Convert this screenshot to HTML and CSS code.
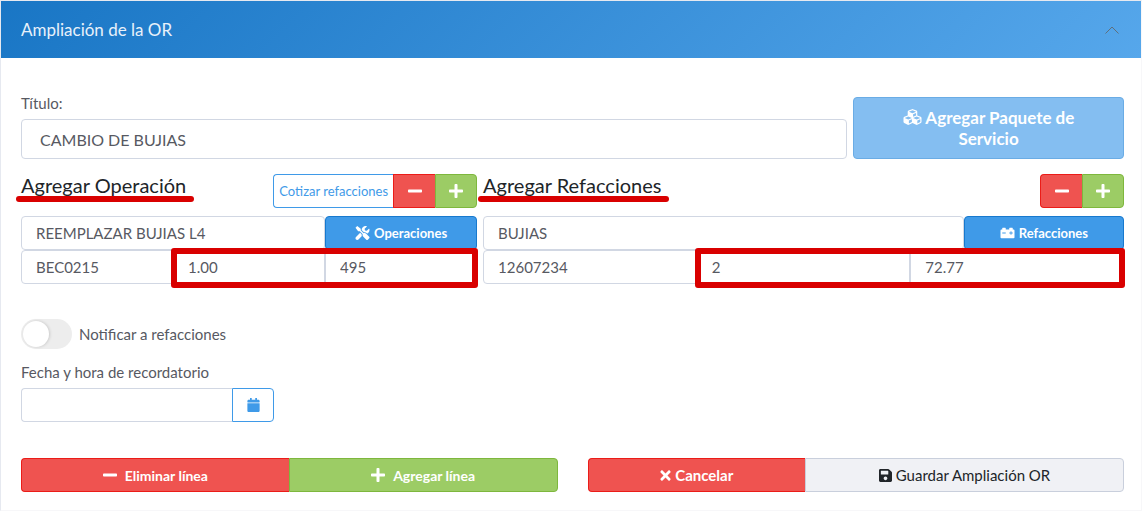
FILE: index.html
```
<!DOCTYPE html>
<html lang="es">
<head>
    <meta charset="UTF-8">
    <meta name="viewport" content="width=device-width, initial-scale=1.0">
    <title>Ampliación de la OR</title>
    <link rel="stylesheet" href="styles.css">
</head>
<body>
<svg class="sprite" aria-hidden="true">
    <symbol id="minus" viewBox="0 0 448 512"><path d="M416 208H32c-17.67 0-32 14.33-32 32v32c0 17.67 14.33 32 32 32h384c17.67 0 32-14.33 32-32v-32c0-17.67-14.33-32-32-32z"/></symbol>
    <symbol id="plus" viewBox="0 0 448 512"><path d="M416 208H272V64c0-17.67-14.33-32-32-32h-32c-17.67 0-32 14.33-32 32v144H32c-17.67 0-32 14.33-32 32v32c0 17.67 14.33 32 32 32h144v144c0 17.67 14.33 32 32 32h32c17.67 0 32-14.33 32-32V304h144c17.67 0 32-14.33 32-32v-32c0-17.67-14.33-32-32-32z"/></symbol>
</svg>

<div class="card">
    <header class="card-header">
        <h1>Ampliación de la OR</h1>
        <button class="collapse-btn" type="button" aria-label="Contraer">
            <svg viewBox="0 0 14 8"><path d="M.5 7.500L7 1l6.500 6.500"/></svg>
        </button>
    </header>

    <form class="card-body">
        <div class="title-row">
            <div class="field">
                <label for="titulo">Título:</label>
                <input class="input-lg" type="text" id="titulo" value="CAMBIO DE BUJIAS">
            </div>
            <button class="btn btn-package" type="button" disabled>
                <span><svg class="icon icon-cubes" viewBox="0 0 512 512"><path d="M488.600 250.200L392 214V105.500c0-15-9.300-28.400-23.400-33.700l-100-37.500c-8.100-3.100-17.100-3.100-25.300 0l-100 37.500c-14.100 5.300-23.400 18.700-23.400 33.700V214l-96.600 36.200C9.300 255.500 0 268.900 0 283.900V394c0 13.600 7.700 26.100 19.900 32.200l100 50c10.100 5.100 22.100 5.100 32.200 0l103.900-52 103.900 52c10.100 5.100 22.100 5.100 32.200 0l100-50c12.200-6.100 19.900-18.600 19.900-32.200V283.900c0-15-9.300-28.400-23.400-33.700zM358 214.800l-85 31.900v-68.200l85-37v73.300zM154 104.100l102-38.200 102 38.200v.6l-102 41.400-102-41.400v-.6zm84 291.100l-85 42.500v-79.100l85-38.800v75.400zm0-112l-102 41.400-102-41.400v-.6l102-38.200 102 38.200v.6zm240 112l-85 42.500v-79.100l85-38.800v75.400zm0-112l-102 41.400-102-41.400v-.6l102-38.200 102 38.200v.6z"/></svg> Agregar Paquete de Servicio</span>
            </button>
        </div>

        <div class="columns">
            <section>
                <div class="section-head">
                    <h2 class="marked">Agregar Operación</h2>
                    <div class="btn-group">
                        <button class="btn btn-quote" type="button">Cotizar refacciones</button>
                        <button class="btn btn-danger btn-square" type="button" aria-label="Quitar operación"><svg class="icon icon-lg"><use href="#minus"/></svg></button>
                        <button class="btn btn-success btn-square" type="button" aria-label="Agregar operación"><svg class="icon icon-lg"><use href="#plus"/></svg></button>
                    </div>
                </div>
                <div class="input-row">
                    <input class="wide" type="text" aria-label="Operación" value="REEMPLAZAR BUJIAS L4">
                    <button class="btn btn-primary third" type="button">
                        <svg class="icon icon-md" viewBox="0 0 512 512"><path d="M501.100 395.700L384 278.600c-23.100-23.100-57.600-27.600-85.400-13.900L192 158.100V96L64 0 0 64l96 128h62.100l106.600 106.600c-13.600 27.800-9.200 62.300 13.900 85.400l117.100 117.100c14.600 14.600 38.200 14.600 52.700 0l52.700-52.700c14.500-14.600 14.500-38.200 0-52.700zM331.700 225c28.300 0 54.900 11 74.900 31l19.400 19.400c15.800-6.900 30.800-16.500 43.800-29.500 37.100-37.100 49.700-89.300 37.900-136.700-2.200-9-13.500-12.100-20.100-5.500l-74.400 74.400-67.900-11.300L334 98.900l74.400-74.400c6.600-6.600 3.400-17.900-5.700-20.200-47.400-11.700-99.600.9-136.600 37.900-28.500 28.500-41.900 66.100-41.200 103.600l82.100 82.100c8.100-1.900 16.500-2.900 24.700-2.900zm-103.900 82l-56.700-56.700L18.700 402.800c-25 25-25 65.500 0 90.500s65.500 25 90.500 0l123.600-123.600c-7.600-19.900-9.900-41.600-5-62.700z"/></svg>
                        Operaciones
                    </button>
                </div>
                <div class="input-row values">
                    <input type="text" aria-label="Código" value="BEC0215">
                    <input type="text" aria-label="Horas" value="1.00">
                    <input type="text" aria-label="Precio" value="495">
                </div>
            </section>

            <section>
                <div class="section-head">
                    <h2 class="marked">Agregar Refacciones</h2>
                    <div class="btn-group">
                        <button class="btn btn-danger btn-square" type="button" aria-label="Quitar refacción"><svg class="icon icon-lg"><use href="#minus"/></svg></button>
                        <button class="btn btn-success btn-square" type="button" aria-label="Agregar refacción"><svg class="icon icon-lg"><use href="#plus"/></svg></button>
                    </div>
                </div>
                <div class="input-row">
                    <input class="wide" type="text" aria-label="Refacción" value="BUJIAS">
                    <button class="btn btn-primary quarter" type="button">
                        <svg class="icon icon-md" viewBox="0 0 512 512"><path d="M480 128h-32V80c0-8.840-7.160-16-16-16h-96c-8.840 0-16 7.160-16 16v48H192V80c0-8.840-7.160-16-16-16H80c-8.840 0-16 7.160-16 16v48H32c-17.670 0-32 14.330-32 32v256c0 17.670 14.330 32 32 32h448c17.670 0 32-14.330 32-32V160c0-17.670-14.330-32-32-32zM192 264c0 4.420-3.580 8-8 8H72c-4.420 0-8-3.580-8-8v-16c0-4.420 3.580-8 8-8h112c4.420 0 8 3.580 8 8v16zm256 0c0 4.420-3.580 8-8 8h-40v40c0 4.420-3.580 8-8 8h-16c-4.420 0-8-3.580-8-8v-40h-40c-4.420 0-8-3.580-8-8v-16c0-4.420 3.580-8 8-8h40v-40c0-4.420 3.580-8 8-8h16c4.420 0 8 3.580 8 8v40h40c4.420 0 8 3.580 8 8v16z"/></svg>
                        Refacciones
                    </button>
                </div>
                <div class="input-row values">
                    <input type="text" aria-label="Número de parte" value="12607234">
                    <input type="text" aria-label="Cantidad" value="2">
                    <input type="text" aria-label="Precio unitario" value="72.77">
                </div>
            </section>
        </div>

        <div class="notify">
            <input type="checkbox" id="notificar">
            <label for="notificar">Notificar a refacciones</label>
        </div>

        <div class="field reminder">
            <label for="fecha">Fecha y hora de recordatorio</label>
            <div class="date-group">
                <input type="text" id="fecha">
                <button class="btn btn-outline btn-square" type="button" aria-label="Abrir calendario">
                    <svg class="icon icon-md" viewBox="0 0 448 512"><path d="M12 192h424c6.600 0 12 5.400 12 12v260c0 26.500-21.500 48-48 48H48c-26.500 0-48-21.500-48-48V204c0-6.600 5.400-12 12-12zm436-44v-36c0-26.500-21.500-48-48-48h-48V12c0-6.600-5.400-12-12-12h-40c-6.600 0-12 5.400-12 12v52H160V12c0-6.600-5.400-12-12-12h-40c-6.600 0-12 5.400-12 12v52H48C21.500 64 0 85.500 0 112v36c0 6.600 5.400 12 12 12h424c6.600 0 12-5.400 12-12z"/></svg>
                </button>
            </div>
        </div>

        <div class="actions">
            <div class="btn-group line-actions">
                <button class="btn btn-danger" type="button"><svg class="icon icon-lg"><use href="#minus"/></svg> Eliminar línea</button>
                <button class="btn btn-success" type="button"><svg class="icon icon-lg"><use href="#plus"/></svg> Agregar línea</button>
            </div>
            <div class="btn-group save-actions">
                <button class="btn btn-danger" type="button">
                    <svg class="icon icon-x" viewBox="0 0 352 512"><path d="M242.720 256l100.070-100.070c12.280-12.280 12.280-32.190 0-44.480l-22.240-22.240c-12.280-12.280-32.190-12.280-44.480 0L176 189.280 75.930 89.210c-12.280-12.280-32.190-12.280-44.480 0L9.210 111.450c-12.280 12.280-12.280 32.190 0 44.480L109.280 256 9.210 356.070c-12.280 12.280-12.280 32.190 0 44.480l22.240 22.240c12.280 12.280 32.200 12.280 44.480 0L176 322.720l100.070 100.070c12.280 12.280 32.200 12.280 44.480 0l22.240-22.240c12.280-12.280 12.280-32.190 0-44.480L242.720 256z"/></svg>
                    Cancelar
                </button>
                <button class="btn btn-light" type="submit">
                    <svg class="icon icon-save" viewBox="0 0 448 512"><path d="M433.941 129.941l-83.882-83.882A48 48 0 0 0 316.118 32H48C21.490 32 0 53.490 0 80v352c0 26.510 21.490 48 48 48h352c26.510 0 48-21.490 48-48V163.882a48 48 0 0 0-14.059-33.941zM224 416c-35.346 0-64-28.654-64-64 0-35.346 28.654-64 64-64s64 28.654 64 64c0 35.346-28.654 64-64 64zm96-304.520V212c0 6.627-5.373 12-12 12H76c-6.627 0-12-5.373-12-12V108c0-6.627 5.373-12 12-12h228.520c3.183 0 6.235 1.264 8.485 3.515l3.480 3.480A11.996 11.996 0 0 1 320 111.480z"/></svg>
                    Guardar Ampliación OR
                </button>
            </div>
        </div>
    </form>
</div>
</body>
</html>
```
FILE: styles.css
```
* {
    box-sizing: border-box;
}
body {
    margin: 0;
    background: #fff;
    color: #575962;
    font-family: Lato, sans-serif;
    font-size: 15px;
}
h1, h2 {
    margin: 0;
    font-weight: 400;
}
.sprite {
    display: none;
}
.card {
    border: 1px solid #e6e9f0;
    border-right-color: #f7f7f9;
    border-bottom-color: #f7f7f9;
}
.card-header {
    display: flex;
    justify-content: space-between;
    align-items: center;
    height: 57px;
    padding: 0 22px 0 20px;
    background: linear-gradient(135deg, #1976c5, #56a7eb);
    color: #e8f1fa;
}
.card-header h1 {
    font-size: 17px;
    line-height: 24px;
}
.collapse-btn {
    display: flex;
    padding: 0;
    border: 0;
    background: none;
    cursor: pointer;
}
.collapse-btn svg {
    width: 14px;
    height: 8px;
    fill: none;
    stroke: #5f6f7c;
}
.card-body {
    padding: 34px 17px 18px 20px;
}
label {
    line-height: 22px;
}
input[type="text"] {
    width: 100%;
    min-width: 0;
    height: 34px;
    padding: 0 14px;
    border: 1px solid #d1d7e3;
    border-radius: 4px;
    background: #fff;
    color: #575962;
    font-family: inherit;
    font-size: 15px;
}
input.input-lg {
    height: 40px;
    padding: 0 18px;
    font-size: 16px;
}
.field {
    display: flex;
    flex-direction: column;
    gap: 5px;
}

/* buttons */
.btn {
    display: flex;
    justify-content: center;
    align-items: center;
    gap: 4px;
    height: 34px;
    padding: 0 5px;
    border: 1px solid;
    border-radius: 4px;
    font-family: inherit;
    font-size: 14px;
    font-weight: 700;
    white-space: nowrap;
    cursor: pointer;
}
.btn-danger {
    background: #ef5350;
    border-color: #eb1c18;
    color: #fff;
}
.btn-success {
    background: #9ccc65;
    border-color: #7eb73d;
    color: #fff;
}
.btn-primary {
    background: #3f9ae8;
    border-color: #1779ce;
    color: #fff;
    font-size: 13px;
}
.btn-outline, .btn-quote {
    background: #fff;
    border-color: #3f9ae8;
    color: #3f9ae8;
}
.btn-quote {
    font-size: 13px;
    font-weight: 400;
}
.btn-light {
    background: #f0f1f5;
    border-color: #c9cfdc;
    color: #212529;
    font-weight: 400;
}
.btn-square {
    width: 42px;
}
.btn-package {
    height: auto;
    min-height: 62px;
    padding: 0 32px;
    background: #84bef1;
    border-color: #6aace5;
    color: #fff;
    font-size: 17px;
    line-height: 21px;
    white-space: normal;
    cursor: default;
}
.btn-group {
    display: flex;
}
.btn-group .btn:not(:first-child) {
    border-top-left-radius: 0;
    border-bottom-left-radius: 0;
}
.btn-group .btn:not(:last-child) {
    border-top-right-radius: 0;
    border-bottom-right-radius: 0;
    border-right: 0;
}
.icon {
    width: 14px;
    height: 14px;
    fill: currentColor;
}
.icon-md {
    width: 15px;
    height: 14px;
}
.icon-lg {
    width: 14px;
    height: 16px;
}
.icon-cubes {
    width: 19px;
    height: 18px;
    vertical-align: -2px;
}
.icon-x {
    width: 11px;
    height: 15px;
}
.icon-save {
    width: 13px;
    height: 15px;
}

.title-row {
    display: grid;
    grid-template-columns: 61fr 20fr;
    align-items: end;
    gap: 6px;
}
.columns {
    display: grid;
    grid-template-columns: 37fr 52fr;
    gap: 6px;
    margin-top: 15px;
}
.section-head {
    display: flex;
    justify-content: space-between;
    align-items: flex-start;
    margin-bottom: 8px;
}
.section-head h2 {
    color: #212529;
    font-size: 20px;
    line-height: 22px;
}
.input-row {
    display: flex;
}
.input-row .wide {
    flex: 1;
}
.third {
    flex: 0 0 33.333%;
}
.quarter {
    flex: 0 0 25%;
}

/* red marker over the section titles and the editable amounts */
.marked {
    position: relative;
}
.marked::after {
    content: "";
    position: absolute;
    left: -5px;
    right: -8px;
    bottom: -6px;
    height: 6px;
    border-radius: 3px;
    background: #d90000;
}
.values {
    position: relative;
}
.values::after {
    content: "";
    position: absolute;
    top: -2px;
    bottom: -4px;
    left: 33%;
    right: -1px;
    border: 6px solid #d90000;
    border-radius: 3px;
    pointer-events: none;
}
.values input:not(:first-child) {
    border-top-left-radius: 0;
    border-bottom-left-radius: 0;
}
.values input:not(:last-child) {
    border-top-right-radius: 0;
    border-bottom-right-radius: 0;
}

.notify {
    display: flex;
    align-items: center;
    gap: 7px;
    margin-top: 35px;
}
.notify input {
    appearance: none;
    width: 51px;
    height: 30px;
    margin: 0;
    padding: 2px;
    border-radius: 15px;
    background: #ededed;
    cursor: pointer;
}
.notify input::before {
    content: "";
    display: block;
    width: 26px;
    height: 26px;
    border-radius: 50%;
    background: #fff;
    box-shadow: 1px 0 3px rgba(0, 0, 0, 0.15);
}
.notify input:checked {
    background: #3f9ae8;
}
.notify input:checked::before {
    margin-left: auto;
}
.reminder {
    margin-top: 12px;
}
.date-group {
    display: flex;
    width: 253px;
}
.date-group input[type="text"] {
    flex: 1;
    border-right: 0;
    border-radius: 4px 0 0 4px;
}
.date-group .btn {
    border-radius: 0 4px 4px 0;
}
.actions {
    display: grid;
    grid-template-columns: 1fr 1fr;
    gap: 30px;
    margin-top: 36px;
}
.line-actions .btn {
    flex: 1;
    gap: 8px;
}
.save-actions {
    display: grid;
    grid-template-columns: 15fr 22fr;
}
.save-actions .btn {
    font-size: 15px;
}
```
